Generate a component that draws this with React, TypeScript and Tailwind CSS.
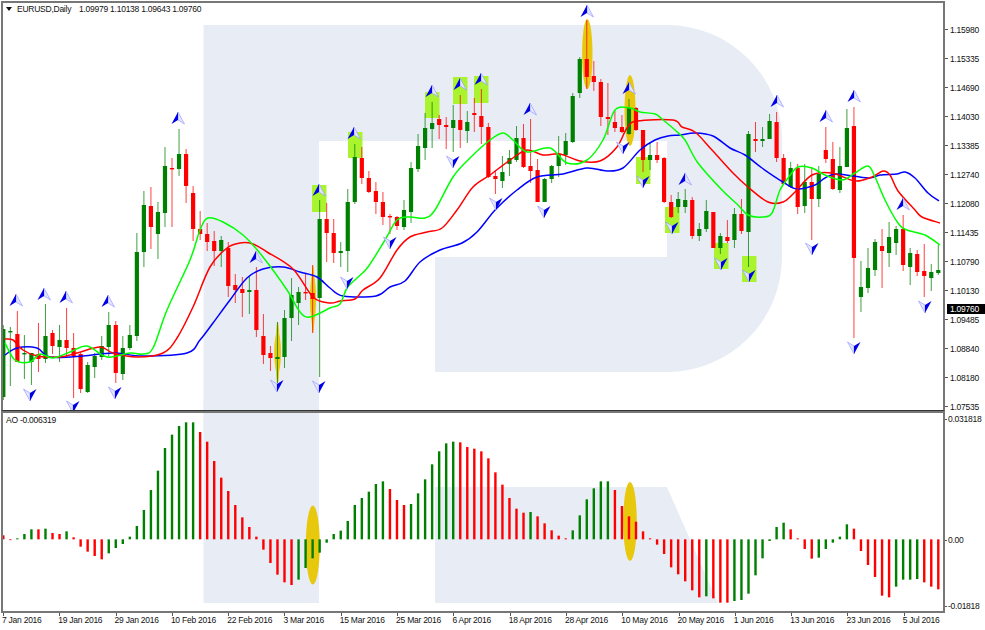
const BAR_STEP = 7.03;
const barX = (i: number) => 3.3 + i * BAR_STEP;

const GREEN = "#008000";
const RED = "#ff0000";
const YELLOW = "#e8c80c";
const LIME = "#a9f42e";

// high, body top, body bottom, low (pixels), per daily bar
const candles: [number, number, number, number, "g" | "r"][] = [
  [325, 329, 397, 400, "g"], [327, 331, 332, 386, "g"], [311, 334, 362, 362, "r"], [335, 353, 354, 379, "g"],
  [353, 353, 362, 385, "g"], [323, 354, 359, 372, "r"], [304, 336, 359, 363, "g"], [330, 333, 346, 354, "r"],
  [325, 340, 347, 362, "g"], [308, 340, 348, 356, "r"], [333, 348, 356, 398, "r"], [353, 354, 389, 393, "r"],
  [362, 365, 392, 393, "g"], [353, 356, 367, 378, "g"], [336, 346, 357, 360, "g"], [312, 325, 347, 357, "g"],
  [321, 325, 373, 383, "r"], [336, 348, 374, 380, "g"], [325, 335, 348, 350, "g"], [233, 252, 336, 341, "g"],
  [191, 205, 252, 267, "g"], [187, 206, 227, 249, "r"], [202, 212, 234, 259, "g"], [147, 166, 213, 227, "g"],
  [158, 168, 169, 227, "r"], [129, 154, 169, 176, "g"], [149, 154, 186, 203, "r"], [186, 193, 229, 241, "r"],
  [211, 229, 234, 240, "r"], [223, 234, 242, 251, "r"], [231, 241, 251, 266, "r"], [236, 240, 251, 267, "g"],
  [242, 248, 286, 297, "r"], [274, 285, 290, 303, "r"], [277, 289, 293, 317, "r"], [276, 290, 292, 314, "g"],
  [267, 290, 330, 337, "r"], [314, 336, 355, 364, "r"], [346, 353, 358, 371, "r"], [322, 357, 359, 383, "g"],
  [310, 318, 357, 368, "g"], [278, 295, 318, 341, "g"], [287, 292, 303, 325, "g"], [273, 292, 293, 300, "r"],
  [265, 293, 299, 333, "r"], [200, 219, 298, 377, "g"], [203, 219, 233, 262, "r"], [219, 233, 253, 263, "r"],
  [242, 251, 253, 267, "g"], [189, 202, 251, 272, "g"], [144, 157, 202, 204, "g"], [147, 158, 178, 184, "r"],
  [171, 178, 192, 193, "r"], [182, 191, 202, 214, "r"], [192, 202, 217, 225, "r"], [214, 216, 217, 234, "r"],
  [216, 217, 226, 230, "r"], [200, 210, 227, 230, "g"], [162, 168, 212, 223, "g"], [134, 146, 169, 172, "g"],
  [113, 128, 148, 160, "g"], [102, 123, 129, 148, "g"], [115, 119, 125, 139, "r"], [117, 125, 127, 149, "r"],
  [105, 120, 128, 152, "g"], [95, 120, 130, 148, "r"], [111, 122, 131, 143, "g"], [98, 113, 115, 132, "r"],
  [89, 116, 127, 144, "r"], [123, 127, 177, 178, "r"], [170, 176, 179, 194, "r"], [156, 172, 181, 188, "g"],
  [150, 158, 164, 176, "g"], [126, 138, 160, 162, "g"], [124, 138, 167, 168, "r"], [119, 166, 171, 183, "r"],
  [159, 170, 202, 202, "r"], [178, 179, 202, 202, "g"], [165, 166, 179, 183, "g"], [136, 154, 166, 177, "g"],
  [133, 141, 155, 165, "g"], [93, 96, 142, 143, "g"], [57, 59, 93, 98, "g"], [20, 59, 77, 89, "r"],
  [61, 76, 82, 91, "r"], [79, 82, 117, 126, "r"], [83, 117, 119, 135, "r"], [111, 122, 128, 132, "r"],
  [115, 127, 132, 133, "r"], [99, 108, 134, 135, "g"], [107, 108, 130, 131, "r"], [130, 130, 160, 172, "r"],
  [143, 155, 160, 170, "g"], [142, 155, 160, 163, "r"], [157, 158, 202, 203, "r"], [195, 202, 217, 218, "r"],
  [192, 199, 207, 213, "g"], [189, 200, 207, 213, "g"], [197, 200, 236, 239, "r"], [223, 229, 236, 241, "g"],
  [200, 211, 229, 232, "g"], [212, 212, 248, 248, "r"], [233, 236, 248, 254, "g"], [220, 237, 241, 243, "r"],
  [208, 214, 240, 248, "g"], [199, 214, 231, 234, "r"], [131, 134, 232, 267, "g"], [122, 139, 141, 152, "r"],
  [127, 139, 141, 147, "g"], [114, 121, 139, 139, "g"], [112, 122, 158, 162, "r"], [154, 158, 184, 185, "r"],
  [162, 168, 187, 188, "g"], [164, 168, 207, 214, "r"], [164, 182, 206, 213, "g"], [167, 182, 199, 240, "r"],
  [166, 174, 199, 207, "g"], [127, 150, 159, 163, "r"], [142, 159, 189, 190, "r"], [147, 166, 190, 193, "g"],
  [109, 128, 167, 167, "g"], [107, 126, 258, 338, "r"], [261, 287, 297, 312, "g"], [248, 268, 288, 293, "g"],
  [239, 242, 270, 276, "g"], [229, 246, 251, 288, "r"], [222, 237, 253, 267, "g"], [226, 229, 243, 255, "g"],
  [215, 229, 265, 271, "r"], [248, 253, 267, 285, "g"], [250, 254, 272, 276, "r"], [244, 271, 276, 297, "r"],
  [264, 272, 278, 291, "g"], [245, 270, 273, 275, "g"],
];

// end of each AO bar, in the 3x scale it was read at: y = 410 + v / 3, zero at 388
const aoEnds = [
  376, 390, 385, 372, 358, 358, 356, 369, 372, 364, 382, 410, 425, 438, 448, 430, 414, 402, 380, 348, 300, 240, 182, 114,
  74, 48, 37, 37, 66, 95, 153, 203, 243, 285, 322, 351, 380, 419, 459, 494, 517, 525, 509, 474, 445, 428, 398, 372, 362,
  333, 285, 264, 245, 222, 214, 237, 270, 285, 282, 250, 208, 163, 124, 100, 95, 97, 111, 116, 124, 145, 187, 224, 264,
  296, 308, 306, 319, 340, 361, 377, 385, 361, 316, 268, 235, 214, 214, 240, 288, 319, 335, 364, 385, 404, 432, 472, 493,
  514, 541, 562, 559, 565, 578, 578, 573, 570, 551, 496, 445, 393, 351, 338, 358, 385, 417, 446, 443, 417, 398, 380, 343,
  356, 423, 465, 501, 557, 562, 530, 509, 509, 507, 517, 530, 538,
];
// runs of red / green, starting with red
const aoRuns = [2, 3, 1, 1, 2, 1, 5, 13, 14, 13, 3, 7, 10, 1, 5, 6, 13, 1, 3, 8, 4, 5, 6, 4, 3];
const aoGreen = aoRuns.flatMap((n, i) => Array<boolean>(n).fill(i % 2 === 1));

const bluePts =
  "5,355 17,348 37,348 50,357 83,356 113,353 143,356 187,353 200,340 213,323 230,300 247,278 263,269 283,267 300,272 317,277 330,288 343,296 376,296 390,287 405,281 420,262 440,250 462,243 477,232 496,209 517,190 537,177 563,174 587,168 607,171 623,168 640,150 655,140 668,136 680,135 695,133 713,136 730,148 745,155 762,168 783,182 797,189 815,185 825,178 837,174 868,178 880,175 897,174 905,172 915,178 928,193 939,201";
const redPts =
  "5,339 13,340 23,350 37,356 60,357 77,353 100,347 113,353 137,357 163,353 177,338 193,307 210,267 227,248 240,243 253,244 267,252 293,269 313,297 330,303 340,301 355,299 363,290 380,278 397,250 410,237 427,232 442,228 457,210 473,187 490,175 510,160 527,150 543,155 560,154 580,161 600,161 617,147 627,128 637,121 673,120 682,127 695,132 712,150 732,172 748,187 768,202 783,202 795,192 812,175 832,173 855,181 872,177 883,171 890,175 898,191 915,210 922,217 940,223";
const limePts =
  "5,343 15,360 30,362 40,354 53,358 70,352 87,346 107,357 130,353 143,354 153,348 167,310 190,260 200,230 208,218 223,222 243,235 263,257 287,290 300,312 310,317 330,308 340,304 347,288 357,278 368,267 385,240 397,220 410,217 425,218 435,210 453,177 470,158 490,140 503,133 513,140 527,152 550,148 567,163 587,160 603,140 615,110 630,108 640,112 655,114 662,119 675,130 685,140 698,163 722,190 738,205 748,215 762,217 772,213 780,190 788,178 798,167 812,168 825,175 842,180 855,173 868,166 875,177 885,200 898,223 907,230 925,235 940,245";

// rounds the averages off so they don't look like straight segments
function smoothPath(pts: string) {
  const p = pts.split(" ").map((s) => s.split(",").map(Number));
  let d = `M${p[0][0]} ${p[0][1]}`;
  for (let i = 0; i < p.length - 1; i++) {
    const a = p[Math.max(i - 1, 0)];
    const b = p[i];
    const c = p[i + 1];
    const e = p[Math.min(i + 2, p.length - 1)];
    const c1x = b[0] + (c[0] - a[0]) / 6;
    const c1y = b[1] + (c[1] - a[1]) / 6;
    const c2x = c[0] - (e[0] - b[0]) / 6;
    const c2y = c[1] - (e[1] - b[1]) / 6;
    d += `C${c1x.toFixed(1)} ${c1y.toFixed(1)} ${c2x.toFixed(1)} ${c2y.toFixed(1)} ${c[0]} ${c[1]}`;
  }
  return d;
}

const upArrows = [
  [16, 300], [44, 294], [66, 297], [108, 301], [178, 118], [256, 257], [319, 190], [354, 133], [432, 91], [460, 84],
  [481, 79], [530, 109], [587, 11], [629, 88], [685, 179], [777, 101], [826, 116], [854, 96], [903, 204],
];
const downArrows = [
  [30, 395], [73, 407], [115, 393], [277, 386], [319, 387], [347, 283], [390, 243], [453, 162], [496, 204], [544, 212],
  [623, 148], [643, 182], [672, 228], [721, 264], [749, 276], [812, 249], [854, 348], [925, 307],
];
const limeBoxes = [
  [312, 185, 212], [348, 132, 158], [425, 92, 118], [453, 77, 104], [474, 76, 103], [636, 157, 184], [665, 207, 233],
  [714, 243, 269], [742, 256, 282],
];

const prices = [
  "1.15980", "1.15335", "1.14690", "1.14030", "1.13385", "1.12740", "1.12080", "1.11435", "1.10790", "1.10130", "1.09485",
  "1.08840", "1.08180", "1.07535",
];
const dates = [
  "7 Jan 2016", "19 Jan 2016", "29 Jan 2016", "10 Feb 2016", "22 Feb 2016", "3 Mar 2016", "15 Mar 2016", "25 Mar 2016",
  "6 Apr 2016", "18 Apr 2016", "28 Apr 2016", "10 May 2016", "20 May 2016", "1 Jun 2016", "13 Jun 2016", "23 Jun 2016",
  "5 Jul 2016",
];

function Watermark() {
  return (
    <g fill="#e8edf5">
      <path d="M203.5 25H667A115 115 0 0 1 782 140V257A115 115 0 0 1 667 372H435V257H667V141H319V430H203.5Z" />
      <rect x="203.5" y="400" width="115.5" height="203" />
      <path d="M435 487H667L718 603H435Z" />
    </g>
  );
}

function Arrow({ x, y, up }: { x: number; y: number; up: boolean }) {
  if (up) {
    return (
      <g transform={`translate(${x} ${y})`}>
        <path d="M0 -6L6.5 6L0 2Z" fill="#e4e6ff" stroke="#9a9cff" strokeWidth="0.7" />
        <path d="M0 -6L-6.5 6L0 2Z" fill="#0000e6" />
      </g>
    );
  }
  return (
    <g transform={`translate(${x} ${y})`}>
      <path d="M0 6L-6.5 -6L0 -2Z" fill="#e4e6ff" stroke="#9a9cff" strokeWidth="0.7" />
      <path d="M0 6L6.5 -6L0 -2Z" fill="#0000e6" />
    </g>
  );
}

function PriceChart() {
  return (
    <svg width="940" height="407" viewBox="3 3 940 407" className="block">
      <Watermark />
      {limeBoxes.map(([x, top, bottom]) => (
        <rect key={x} x={x} y={top} width="14.5" height={bottom - top} fill={LIME} />
      ))}
      <g fill={YELLOW}>
        <ellipse cx="277.6" cy="352.5" rx="2" ry="31" />
        <ellipse cx="277.6" cy="352.5" rx="3.4" ry="20" />
        <ellipse cx="313" cy="299" rx="1.8" ry="34" />
        <ellipse cx="313" cy="299" rx="3" ry="24" />
        <ellipse cx="587.3" cy="54" rx="5.2" ry="35" />
        <ellipse cx="630" cy="110.5" rx="5.5" ry="35.5" />
      </g>
      {candles.map(([hi, top, bottom, lo, dir], i) => {
        const color = dir === "g" ? GREEN : RED;
        const x = barX(i);
        return (
          <g key={i} fill={color}>
            <rect x={x - 0.5} y={hi} width="1" height={lo - hi} opacity="0.75" />
            <rect x={x - 2.1} y={top} width="4.2" height={Math.max(bottom - top, 1.4)} />
          </g>
        );
      })}
      <g fill="none" strokeWidth="1.5" strokeLinejoin="round">
        <path d={smoothPath(bluePts)} stroke="#0000ff" />
        <path d={smoothPath(redPts)} stroke="#ff0000" />
        <path d={smoothPath(limePts)} stroke="#00ff00" />
      </g>
      {upArrows.map(([x, y]) => (
        <Arrow key={`u${x}`} x={x} y={y} up />
      ))}
      {downArrows.map(([x, y]) => (
        <Arrow key={`d${x}`} x={x} y={y} up={false} />
      ))}
    </svg>
  );
}

function AoChart() {
  const zero = 410 + 388 / 3;
  return (
    <svg width="940" height="198" viewBox="3 413 940 198" className="block">
      <Watermark />
      <g fill={YELLOW}>
        <ellipse cx="312.8" cy="545" rx="7" ry="39.5" />
        <ellipse cx="630" cy="521.5" rx="6.8" ry="39.5" />
      </g>
      {aoEnds.map((v, i) => {
        const end = 410 + v / 3;
        return (
          <rect
            key={i}
            x={barX(i) - 1.2}
            y={Math.min(end, zero)}
            width="2.4"
            height={Math.max(Math.abs(end - zero), 0.8)}
            fill={aoGreen[i] ? GREEN : RED}
          />
        );
      })}
    </svg>
  );
}

export default function App() {
  return (
    <div className="w-[985px] h-[630px] overflow-hidden bg-white pt-px pl-px font-['Liberation_Sans',sans-serif] text-[8.5px] tracking-[-0.25px] leading-[10px] text-[#111]">
      <div className="flex h-[410px]">
        <div className="relative w-[944px] h-[410px] border-2 border-b border-[#777] border-b-[#333]">
          <PriceChart />
          <div className="absolute left-[3px] top-px flex items-center whitespace-pre">
            <svg width="6" height="4" viewBox="0 0 6 4" className="mr-[5px]">
              <path d="M0 0H6L3 4Z" fill="#111" />
            </svg>
            <span className="w-[62px]">EURUSD,Daily</span>
            <span>1.09979 1.10138 1.09643 1.09760</span>
          </div>
        </div>
        <div className="relative w-[40px] pt-[14px]">
          {prices.map((p) => (
            <div key={p} className="flex h-[29.04px] items-center gap-[2px]">
              <div className="h-px w-[3px] bg-[#555]" />
              <span>{p}</span>
            </div>
          ))}
          <div className="absolute left-[2px] top-[303px] h-[10px] w-[38px] bg-black pl-[3px] text-white">1.09760</div>
        </div>
      </div>

      <div className="flex">
        <div className="relative w-[944px] h-[202px] border-2 border-[#777]">
          <AoChart />
          <div className="absolute left-[3px] top-[2px]">AO -0.006319</div>
        </div>
        <div className="w-[40px] pt-[3px]">
          <div className="flex h-[10px] items-center gap-px">
            <div className="h-px w-[2px] bg-[#555]" />
            <span>0.031818</span>
          </div>
          <div className="mt-[111px] flex h-[10px] items-center gap-px">
            <div className="h-px w-[2px] bg-[#555]" />
            <span>0.00</span>
          </div>
          <div className="mt-[56px] flex h-[10px] items-center gap-px">
            <div className="h-px w-[2px] bg-[#555]" />
            <span>-0.01818</span>
          </div>
        </div>
      </div>

      <div className="flex pl-px">
        {dates.map((d) => (
          <div key={d} className="w-[56.3px] shrink-0 whitespace-nowrap">
            <div className="ml-px h-[3px] w-px bg-[#555]" />
            <div className="-mt-px">{d}</div>
          </div>
        ))}
      </div>
    </div>
  );
}
